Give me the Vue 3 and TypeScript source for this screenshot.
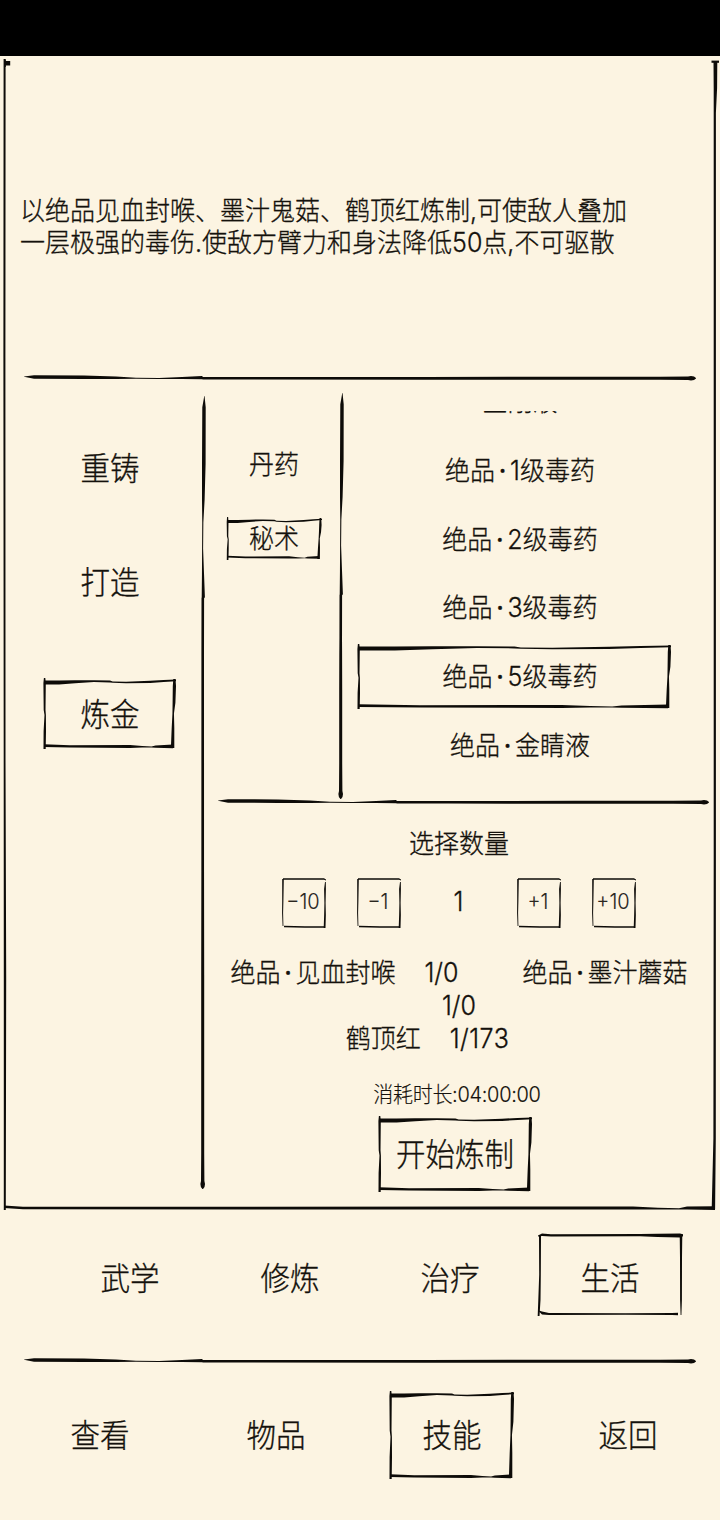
<template>
  <div class="screen">
    <div class="status-bar"></div>

    <section class="panel">
      <InkFrame class="frame panel-frame" kind="panel" :width="716" :height="1152" />

      <div class="description">
        <p class="tall">
          以绝品见血封喉、墨汁鬼菇、鹤顶红炼制,可使敌人叠加<br />
          一层极强的毒伤.使敌方臂力和身法降低50点,不可驱散
        </p>
      </div>

      <InkLine class="line-top" :length="672" />

      <div class="body">
        <nav class="crafts">
          <button
            v-for="craft in crafts"
            :key="craft"
            class="craft"
            @click="activeCraft = craft"
          >
            <InkFrame v-if="craft === activeCraft" class="frame craft-frame" :width="134" :height="71" />
            <span class="tall">{{ craft }}</span>
          </button>
        </nav>

        <InkLine class="line-crafts" :length="793" vertical />

        <div class="workshop">
          <div class="picker">
            <nav class="kinds">
              <button v-for="kind in kinds" :key="kind" class="kind" @click="activeKind = kind">
                <InkFrame
                  v-if="kind === activeKind"
                  class="frame kind-frame"
                  :width="97"
                  :height="43"
                  :weight="0.75"
                />
                <span class="tall">{{ kind }}</span>
              </button>
            </nav>

            <InkLine class="line-kinds" :length="406" vertical />

            <div class="recipes">
              <button
                v-for="recipe in recipes"
                :key="recipe.name"
                class="recipe"
                @click="activeRecipe = recipe.name"
              >
                <InkFrame
                  v-if="recipe.name === activeRecipe"
                  class="frame recipe-frame"
                  :width="315"
                  :height="65"
                />
                <span class="tall">
                  <template v-if="recipe.grade">{{ recipe.grade }}<i class="dot">·</i></template>{{ recipe.name }}
                </span>
              </button>
            </div>
          </div>

          <InkLine class="line-picker" :length="491" />

          <div class="order">
            <h2 class="order-title"><span class="tall">选择数量</span></h2>

            <div class="stepper">
              <button v-for="n in [10, 1]" :key="n" class="step" @click="change(-n)">
                <InkFrame class="frame step-frame" kind="small" :width="46" :height="52" />
                <span class="tall">−{{ n }}</span>
              </button>
              <span class="amount"><span class="tall">{{ amount }}</span></span>
              <button v-for="n in [1, 10]" :key="n" class="step" @click="change(n)">
                <InkFrame class="frame step-frame" kind="small" :width="46" :height="52" />
                <span class="tall">+{{ n }}</span>
              </button>
            </div>

            <div class="materials">
              <div class="material-row">
                <span class="tall">绝品<i class="dot">·</i>见血封喉</span>
                <span class="tall count">{{ amount }}/0</span>
                <span class="tall second">绝品<i class="dot">·</i>墨汁蘑菇</span>
              </div>
              <div class="material-row">
                <span class="tall">{{ amount }}/0</span>
              </div>
              <div class="material-row last">
                <span class="tall">鹤顶红</span>
                <span class="tall count">{{ amount }}/173</span>
              </div>
            </div>

            <div class="duration"><span class="tall">消耗时长:{{ duration }}</span></div>

            <button class="start">
              <InkFrame class="frame start-frame" :width="155" :height="76" />
              <span class="tall">开始炼制</span>
            </button>
          </div>
        </div>
      </div>
    </section>

    <nav class="tabs">
      <button v-for="tab in tabs" :key="tab" class="tab" @click="activeTab = tab">
        <InkFrame v-if="tab === activeTab" class="frame tab-frame" kind="tab" :width="147" :height="85" />
        <span class="tall">{{ tab }}</span>
      </button>
    </nav>

    <InkLine class="line-bottom" :length="672" />

    <nav class="menu">
      <button v-for="item in menu" :key="item" class="menu-item" @click="activeMenu = item">
        <InkFrame v-if="item === activeMenu" class="frame menu-frame" :width="126" :height="88" />
        <span class="tall">{{ item }}</span>
      </button>
    </nav>
  </div>
</template>

<script setup lang="ts">
import { computed, h, ref } from 'vue'
import type { FunctionalComponent } from 'vue'

interface Recipe {
  grade?: string
  name: string
}

// Brush strokes: [position along the stroke, offset across it, thickness]
type StrokePoint = [number, number, number]

const ribbon = (points: StrokePoint[], vertical = false): string => {
  const near = points.map(([s, o, t]) => [s, o - t / 2])
  const far = points.map(([s, o, t]) => [s, o + t / 2]).reverse()
  const outline = [...near, ...far].map(([s, o]) =>
    vertical ? `${o.toFixed(2)} ${s.toFixed(2)}` : `${s.toFixed(2)} ${o.toFixed(2)}`
  )
  return `M${outline.join('L')}Z`
}

const svg = (width: number, height: number, paths: string[]) =>
  h(
    'svg',
    { width, height, viewBox: `0 0 ${width} ${height}`, fill: '#0d0b08', 'aria-hidden': 'true' },
    paths.map((d) => h('path', { d }))
  )

interface LineProps {
  length: number
  vertical?: boolean
}

const InkLine: FunctionalComponent<LineProps> = ({ length: len, vertical }) => {
  const k = vertical ? 1.13 : 1
  const points: StrokePoint[] = [
    [0, 4.6, 0.3],
    [10, 5, 3.4],
    [60, 5.2, 3.6],
    [92, 5.7, 2.6],
    [112, 6.2, 1.1],
    [135, 6.4, 1],
    [158, 6, 2.1],
    [178, 5.7, 3.2],
    [179, 6.2, 2.6],
    [230, 6.3, 2.6]
  ]
  const stroke: StrokePoint[] = points.map(([s, o, t]) => [s * k, o, t])
  stroke.push(
    [len * 0.6, 6.3, 2.7],
    [len * 0.73, 6.3, 3],
    [len - 36, 6.3, 3],
    [len - 8, 6.3, 3.4],
    [len - 5, 6.3, 4.6],
    [len - 2, 6.3, 3.6],
    [len, 6.3, 0.6]
  )
  if (!vertical) return svg(len, 12, [ribbon(stroke)])
  return svg(12, len, [ribbon(stroke.map(([s, o, t]) => [s, 12 - o, t]), true)])
}
InkLine.props = { length: Number, vertical: Boolean }

interface FrameProps {
  width: number
  height: number
  kind?: string
  weight?: number
}

const InkFrame: FunctionalComponent<FrameProps> = ({ width: W, height: H, kind, weight: w = 1 }) => {
  if (kind === 'panel') {
    return svg(W, H, [
      'M1 1.5h1.8v1.6h4.4v4.4h-4.4V9h-1.8z',
      ribbon([[1, 1.6, 2], [300, 1.4, 2], [700, 1.6, 1.8], [920, 2, 2.4], [H, 1.8, 2]], true),
      'M708.5 2.6h7.5v2.2h-7.5z',
      ribbon([[3, 712.4, 3.8], [30, 712.4, 3.4], [55, 711.8, 2.2], [800, 711.8, 2.2], [1080, 711.6, 2.4], [H - 1, 710.4, 3.4]], true),
      ribbon([[1, H - 3.2, 2.6], [20, H - 2, 2.6], [630, H - 1.9, 3], [655, H - 1.4, 1.6], [676, H - 1.2, 1.2], [684, H - 2, 3], [712, H - 1.9, 3.8]])
    ])
  }
  if (kind === 'tab') {
    return svg(W, H, [
      ribbon([[1, 4, 1], [5, 2.8, 2.6], [14, 3.4, 2.2], [W * 0.7, 3.2, 2.2], [W * 0.82, 3.4, 3.2], [W - 4, 3.4, 4], [W - 1, 3.2, 2]]),
      ribbon([[3, 3, 2], [H * 0.5, 3, 1.6], [H * 0.8, 2.4, 2.2], [H - 1, 1.6, 1.8]], true),
      ribbon([[2, W - 3, 2.6], [H * 0.3, W - 3, 2], [H * 0.8, W - 3, 1.8], [H - 2, W - 3, 0.8]], true),
      ribbon([[2, H - 6, 0.8], [5, H - 4, 2.8], [12, H - 3, 2], [W * 0.6, H - 3, 1.6], [W - 12, H - 3, 1.8], [W - 6, H - 3, 2.6]])
    ])
  }
  if (kind === 'small') {
    return svg(W, H, [
      ribbon([[2, 2, 1.6], [20, 2, 1.3], [43, 2, 1.5], [45, 3, 1]]),
      ribbon([[2, 2, 1.6], [24, 1.8, 1.2], [36, 1.6, 1], [H - 3, 2, 0.8]], true),
      ribbon([[5, W - 1.6, 0.8], [12, W - 2, 1.8], [26, W - 2, 1.2], [38, W - 2, 1.7], [H - 1, W - 2.4, 1.8]], true),
      ribbon([[3, H - 2.4, 1.5], [24, H - 2, 1.4], [W - 2, H - 2, 1.6]])
    ])
  }
  return svg(W, H, [
    ribbon([
      [1, 4.4, 4 * w],
      [W * 0.12, 4.4, 4 * w],
      [W * 0.24, 3.8, 3 * w],
      [W * 0.38, 3.2, 1.8 * w],
      [W * 0.5, 3.4, 2 * w],
      [W * 0.52, 4.2, 1.3 * w],
      [W * 0.62, 4.6, 1.5 * w],
      [W * 0.8, 3.8, 2.2 * w],
      [W * 0.9, 3, 2 * w],
      [W - 1, 2.4, 1.6 * w]
    ]),
    ribbon([[0, 1.6, 1.4 * w], [5, 1.6, 2.4 * w], [H * 0.45, 1.6, 1.8 * w], [H * 0.52, 2.2, 1.4 * w], [H * 0.75, 1.8, 2.4 * w], [H, 1.6, 2.2 * w]], true),
    ribbon([[1, W - 2.6, 2.2 * w], [8, W - 2.6, 3.2 * w], [H * 0.35, W - 3, 2.8 * w], [H * 0.5, W - 3.8, 1.5 * w], [H * 0.7, W - 4, 2.6 * w], [H - 1, W - 4.4, 3.4 * w]], true),
    ribbon([
      [1, H - 3.4, 2.6 * w],
      [W * 0.2, H - 2.6, 2.4 * w],
      [W * 0.65, H - 2.6, 3 * w],
      [W * 0.74, H - 2.2, 1.6 * w],
      [W * 0.81, H - 2, 0.9 * w],
      [W * 0.84, H - 2.4, 2.4 * w],
      [W - 4, H - 2.6, 3.8 * w]
    ])
  ])
}
InkFrame.props = { width: Number, height: Number, kind: String, weight: Number }

const crafts = ['重铸', '打造', '炼金']
const kinds = ['丹药', '秘术']
const recipes: Recipe[] = [
  { name: '金刚液' },
  { grade: '绝品', name: '1级毒药' },
  { grade: '绝品', name: '2级毒药' },
  { grade: '绝品', name: '3级毒药' },
  { grade: '绝品', name: '5级毒药' },
  { grade: '绝品', name: '金睛液' }
]
const tabs = ['武学', '修炼', '治疗', '生活']
const menu = ['查看', '物品', '技能', '返回']

const activeCraft = ref('炼金')
const activeKind = ref('秘术')
const activeRecipe = ref('5级毒药')
const activeTab = ref('生活')
const activeMenu = ref('技能')
const amount = ref(1)

// 4 hours for each piece
const duration = computed(() => `${String(amount.value * 4).padStart(2, '0')}:00:00`)

const change = (n: number) => {
  amount.value = Math.max(1, amount.value + n)
}
</script>

<style>
body {
  margin: 0;
  background: #fcf4e2;
}
</style>

<style scoped>
.screen {
  display: flex;
  flex-direction: column;
  width: 720px;
  height: 1520px;
  overflow: hidden;
  background: #fcf4e2;
  color: #14110c;
  font-family: Inter, 'Noto Sans CJK SC', sans-serif;
  font-weight: 300;
  font-size: 25px;
  line-height: 30px;
  -webkit-text-stroke: 0.3px #14110c;
}

button {
  position: relative;
  display: flex;
  align-items: center;
  justify-content: center;
  padding: 0;
  border: none;
  background: none;
  color: inherit;
  font: inherit;
  cursor: pointer;
}

svg {
  display: block;
  flex-shrink: 0;
}

/* the game's lettering is taller than it is wide */
.tall {
  display: inline-block;
  transform: scaleY(1.06);
  white-space: nowrap;
}

.dot {
  display: inline-block;
  width: 15px;
  font-style: normal;
  font-weight: 500;
  text-align: center;
}

.frame {
  position: absolute;
}

.status-bar {
  height: 56px;
  flex-shrink: 0;
  background: #000;
}

.panel {
  position: relative;
  display: flex;
  flex-direction: column;
  height: 1154px;
  flex-shrink: 0;
}

.panel-frame {
  left: 3px;
  top: 2px;
  pointer-events: none;
}

.description {
  display: flex;
  align-items: center;
  box-sizing: border-box;
  height: 316px;
  padding: 27px 20px 0;
}

.description p {
  margin: 0;
  line-height: 31.1px;
}

.line-top,
.line-bottom {
  margin-left: 24px;
}

.body {
  display: flex;
  height: 826px;
}

.crafts {
  width: 174px;
  padding: 27px 0 0 23px;
  font-size: 29.5px;
}

.craft {
  width: 100%;
  height: 114px;
}

.craft:last-child {
  height: 150px;
}

.craft-frame {
  left: 20px;
  top: 39px;
}

.line-crafts {
  margin-top: 12px;
}

.workshop {
  display: flex;
  flex-direction: column;
  width: 511px;
}

.picker {
  display: flex;
  height: 415px;
}

.kinds {
  width: 122px;
  padding: 43px 0 0 4px;
}

.kind {
  width: 100%;
  height: 74px;
}

.kind-frame {
  left: 13px;
  top: 16px;
}

.line-kinds {
  margin-top: 9px;
}

.recipes {
  width: 346px;
  height: 384px;
  margin-top: 27px;
  overflow: hidden;
}

.recipe {
  width: 100%;
  height: 68.6px;
}

/* scrolled almost out of the list */
.recipe:first-child {
  height: 65px;
  margin: -42.8px 0 2.8px;
}

.recipe-frame {
  left: 10px;
  top: 2px;
}

.line-picker {
  margin: -3px 0 0 9px;
}

.order {
  display: flex;
  flex-direction: column;
  align-items: center;
  width: 500px;
}

.order-title {
  margin: 0;
  font: inherit;
  line-height: 70px;
}

.stepper {
  display: flex;
  align-items: center;
  gap: 30px;
  padding-right: 2px;
}

.step {
  width: 45px;
  height: 50px;
  padding-bottom: 2px;
  box-sizing: border-box;
  font-size: 20px;
  color: #2a261f;
  -webkit-text-stroke-width: 0.1px;
}

.step-frame {
  left: 0;
  top: -1.5px;
}

.amount {
  width: 55px;
  padding: 0 0 5px 1px;
  box-sizing: border-box;
  text-align: center;
}

.materials {
  display: flex;
  flex-direction: column;
  width: 100%;
  margin-top: 27px;
}

.material-row {
  display: flex;
  align-items: center;
  justify-content: center;
  height: 33px;
}

.material-row.last {
  padding-right: 63px;
}

.count {
  margin-left: 29px;
}

.last .count {
  letter-spacing: 0.5px;
}

.second {
  margin-left: 64px;
}

.duration {
  margin-top: 26px;
  padding-right: 4px;
  font-size: 20px;
  letter-spacing: -0.3px;
  -webkit-text-stroke-width: 0.15px;
}

.start {
  width: 154px;
  height: 75px;
  margin: 6px 8px 0 0;
  font-size: 29.5px;
}

.start-frame {
  left: 0;
  top: 0;
}

.tabs,
.menu {
  display: flex;
  font-size: 29.5px;
}

.tabs {
  height: 136px;
  margin-bottom: 9px;
  padding: 0 30px 0 50px;
}

.tab {
  width: 160px;
}

.tab-frame {
  left: 7px;
  top: 22px;
}

.menu {
  height: 136px;
  padding: 0 4px 0 12px;
}

.menu-item {
  width: 176px;
}

.menu-frame {
  left: 25px;
  top: 24px;
}
</style>
